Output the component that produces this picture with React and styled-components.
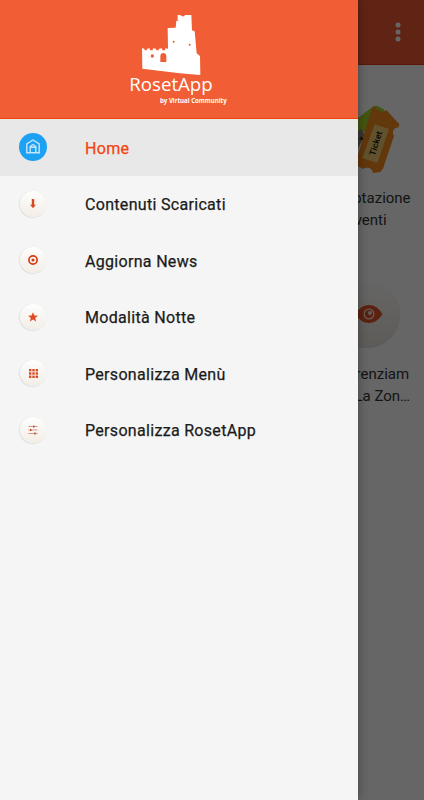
import styled, { createGlobalStyle } from 'styled-components';

const GlobalStyle = createGlobalStyle`
    * {
        box-sizing: border-box;
    }
    body {
        margin: 0;
        font-family: Roboto, 'Liberation Sans', sans-serif;
    }
`;

const AppStyles = styled.div`
    position: relative;
    width: 100%;
    height: 100vh;
    overflow: hidden;
    background-color: #ffffff;
`;

const ToolbarStyles = styled.header`
    display: flex;
    align-items: center;
    justify-content: flex-end;
    height: 65px;
    padding: 0 15px;
    background-color: #f15b32;
    border-bottom: 1px solid #e04010;
`;

const TilesStyles = styled.main`
    display: flex;
    flex-direction: column;
    align-items: flex-end;
    padding-top: 37px;
`;

const TileStyles = styled.article`
    display: flex;
    flex-direction: column;
    align-items: center;
    width: 115px;
    height: 176px;
    svg {
        display: block;
        flex-shrink: 0;
    }
`;

const TileLabel = styled.span`
    margin-top: 13px;
    font-size: 15px;
    line-height: 22px;
    text-align: center;
    white-space: pre;
    color: #333;
`;

const ScrimStyles = styled.div`
    position: absolute;
    inset: 0;
    background-color: rgba(0, 0, 0, 0.6);
`;

const DrawerStyles = styled.aside`
    position: absolute;
    top: 0;
    bottom: 0;
    left: 0;
    width: 358px;
    background-color: #f5f5f5;
    box-shadow: 0 0 10px rgba(0, 0, 0, 0.35);
`;

const DrawerHeader = styled.div`
    display: flex;
    justify-content: center;
    height: 119px;
    padding: 5px 0 0 2px;
    background-color: #f15d34;
    border-bottom: 1px solid #ee4207;
`;

const MenuStyles = styled.nav`
    display: flex;
    flex-direction: column;
`;

const MenuItem = styled.a`
    display: flex;
    align-items: center;
    height: 56.5px;
    padding-left: 19px;
    background-color: ${({ $active }) => ($active ? '#e8e8e8' : 'transparent')};
    color: ${({ $active }) => ($active ? '#f4440f' : '#1b1b1b')};
    font-size: 16px;
    letter-spacing: 0.31px;
    -webkit-text-stroke: 0.25px currentColor;
`;

const MenuIcon = styled.span`
    display: flex;
    align-items: center;
    justify-content: center;
    width: ${({ $active }) => ($active ? 28 : 26)}px;
    height: ${({ $active }) => ($active ? 28 : 26)}px;
    margin: ${({ $active }) => ($active ? '0 38px 0 0' : '0 39px 0 1px')};
    border-radius: 50%;
    background: ${({ $active }) =>
        $active ? '#1da1f2' : 'linear-gradient(#fefefd, #f2ede6)'};
    box-shadow: ${({ $active }) =>
        $active ? 'none' : '-0.5px 0.5px 1.5px rgba(0, 0, 0, 0.16)'};
`;

const MenuLabel = styled.span`
    padding-top: 1.5px;
`;

function Logo() {
    return (
        <svg width="120" height="110" viewBox="0 0 360 330" fill="#fff">
            <path
                fillRule="evenodd"
                d="M173 30l10 1 2 3h8l1-4h20l2 46 8 3 6 66 10 8 1 57-62-5-112-14-1-61 7 1 1 5h6l1-5 8-1 1 6h8l1-6 9 1 1 5h7l1-5 9-1 1 6h8l1-6 8 1-1-62 24-1 2-21h7l-3-3zM92 153a5 5 0 1 0 10 0 5 5 0 1 0-10 0zM121 171v-18q1-9 9-9t9 9v18zM158 110a3 3 0 1 0 6 0 3 3 0 1 0-6 0zM206 119a3 3 0 1 0 6 0 3 3 0 1 0-6 0z"
            />
            <text
                x="28"
                y="258"
                fontFamily="'Open Sans', 'Noto Sans', sans-serif"
                fontSize="57"
                textLength="250"
                lengthAdjust="spacingAndGlyphs"
            >
                RosetApp
            </text>
            <text
                x="120"
                y="293"
                fontFamily="'Open Sans', 'Noto Sans', sans-serif"
                fontSize="20"
                fontWeight="700"
                textLength="200"
                lengthAdjust="spacingAndGlyphs"
            >
                by Virtual Community
            </text>
        </svg>
    );
}

function TicketIcon() {
    return (
        <svg width="72" height="72" viewBox="-30 36 216 216">
            <path d="M-20 138L95 50q6-5 14-2l20 10q4 6 1 14L20 170z" fill="#a6d62c" />
            <path d="M10 170l50-55 12 22-24 44z" fill="#8f8b78" />
            <text
                transform="translate(64 153) rotate(-60)"
                fontFamily="Roboto, sans-serif"
                fontSize="20"
                fontWeight="700"
            >
                y
            </text>
            <path
                d="M92 56q3-7 10-6 6 11 17 14t17-4l39 43-2 9q-15 1-17 13-2 9 3 13l-33 98-8 10-22 3q-2-12-12-15-12-3-17 3L42 225z"
                fill="#f58a1c"
            />
            <path
                d="M89 82q40 22 83 27"
                fill="none"
                stroke="#d8c03a"
                strokeWidth="2"
                strokeDasharray="4 2"
            />
            <path d="M101 103l43 14-35 102-45-15z" fill="#f2cc70" />
            <text
                transform="translate(101 199) rotate(-72)"
                fontFamily="Roboto, sans-serif"
                fontSize="26"
                fontWeight="500"
                textLength="76"
                lengthAdjust="spacingAndGlyphs"
                fill="#111"
            >
                Ticket
            </text>
        </svg>
    );
}

function EyeIcon() {
    return (
        <svg width="72" height="72" viewBox="2 0 72 72">
            <defs>
                <linearGradient id="disc" x1="0" y1="0" x2="0" y2="1">
                    <stop offset="0" stopColor="#fdfdfc" />
                    <stop offset="1" stopColor="#ede7df" />
                </linearGradient>
            </defs>
            <circle cx="38" cy="37" r="33" fill="#e2e2e2" />
            <circle cx="38.5" cy="36" r="32.5" fill="url(#disc)" />
            <path d="M26 36q6-9 14-9t13.500 9q-5.500 9-13.500 9t-14-9z" fill="#e5532a" />
            <circle cx="40" cy="36" r="4.900" fill="none" stroke="#f3e9e2" strokeWidth="1.300" />
            <circle cx="41" cy="35" r="2" fill="#f3e9e2" />
        </svg>
    );
}

function HomeIcon() {
    return (
        <svg width="14" height="16" viewBox="0 0 14 16" fill="none" stroke="#c6e6fb">
            <path d="M.8 13.700V4.800L7 1l6.200 3.800v8.900z" strokeWidth="1.400" />
            <path d="M4.200 14V7.500L7 5.500l2.800 2V14M4.500 8.200h5" strokeWidth="1.400" />
        </svg>
    );
}

function DownloadIcon() {
    return (
        <svg width="10" height="12" viewBox="0 0 10 12" fill="#d9481e">
            <path d="M3.800 1h2.400v5.700h1.700L5 10.200 2.100 6.700h1.700z" />
        </svg>
    );
}

function TargetIcon() {
    return (
        <svg width="12" height="12" viewBox="0 0 12 12">
            <circle cx="6" cy="6" r="4.100" fill="none" stroke="#d63c14" strokeWidth="1.700" />
            <circle cx="6" cy="6" r="1.600" fill="#d63c14" />
        </svg>
    );
}

function StarIcon() {
    return (
        <svg width="12" height="12" viewBox="0 0 12 12" fill="#e04a20">
            <path d="M6 1.200l1.400 3.200 3.500.3-2.700 2.200.9 3.500L6 8.600l-3.100 1.800.9-3.500L1.100 4.700l3.500-.3z" />
        </svg>
    );
}

function GridIcon() {
    const cells = [0, 3.3, 6.6];
    return (
        <svg width="9" height="9" viewBox="0 0 9 9" fill="#dd4a26">
            {cells.map((y) =>
                cells.map((x) => (
                    <rect key={`${x}-${y}`} x={x} y={y} width="2.400" height="2.400" />
                ))
            )}
        </svg>
    );
}

function SlidersIcon() {
    return (
        <svg width="10" height="10" viewBox="0 0 10 10" stroke="#c9826c" strokeWidth="0.800">
            <path d="M.5 1.500h9M.5 5h9M.5 8.500h9" />
            <path d="M5.800.4v2.200M2.700 3.900v2.200M7 7.400v2.200" stroke="#b73c1c" strokeWidth="1.300" />
        </svg>
    );
}

const menu = [
    { label: 'Home', icon: HomeIcon, active: true },
    { label: 'Contenuti Scaricati', icon: DownloadIcon },
    { label: 'Aggiorna News', icon: TargetIcon },
    { label: 'Modalità Notte', icon: StarIcon },
    { label: 'Personalizza Menù', icon: GridIcon },
    { label: 'Personalizza RosetApp', icon: SlidersIcon },
];

export default function App() {
    return (
        <AppStyles>
            <GlobalStyle />
            <ToolbarStyles>
                <svg width="22" height="22" viewBox="0 0 22 22" fill="#fff">
                    <circle cx="11" cy="4" r="2.500" />
                    <circle cx="11" cy="11" r="2.500" />
                    <circle cx="11" cy="18" r="2.500" />
                </svg>
            </ToolbarStyles>
            <TilesStyles>
                <TileStyles>
                    <TicketIcon />
                    <TileLabel>{'Prenotazione\nEventi'}</TileLabel>
                </TileStyles>
                <TileStyles>
                    <EyeIcon />
                    <TileLabel>{'Differenziam\noci - La Zon…'}</TileLabel>
                </TileStyles>
            </TilesStyles>
            <ScrimStyles />
            <DrawerStyles>
                <DrawerHeader>
                    <Logo />
                </DrawerHeader>
                <MenuStyles>
                    {menu.map(({ label, icon: Icon, active }) => (
                        <MenuItem key={label} $active={active}>
                            <MenuIcon $active={active}>
                                <Icon />
                            </MenuIcon>
                            <MenuLabel>{label}</MenuLabel>
                        </MenuItem>
                    ))}
                </MenuStyles>
            </DrawerStyles>
        </AppStyles>
    );
}
